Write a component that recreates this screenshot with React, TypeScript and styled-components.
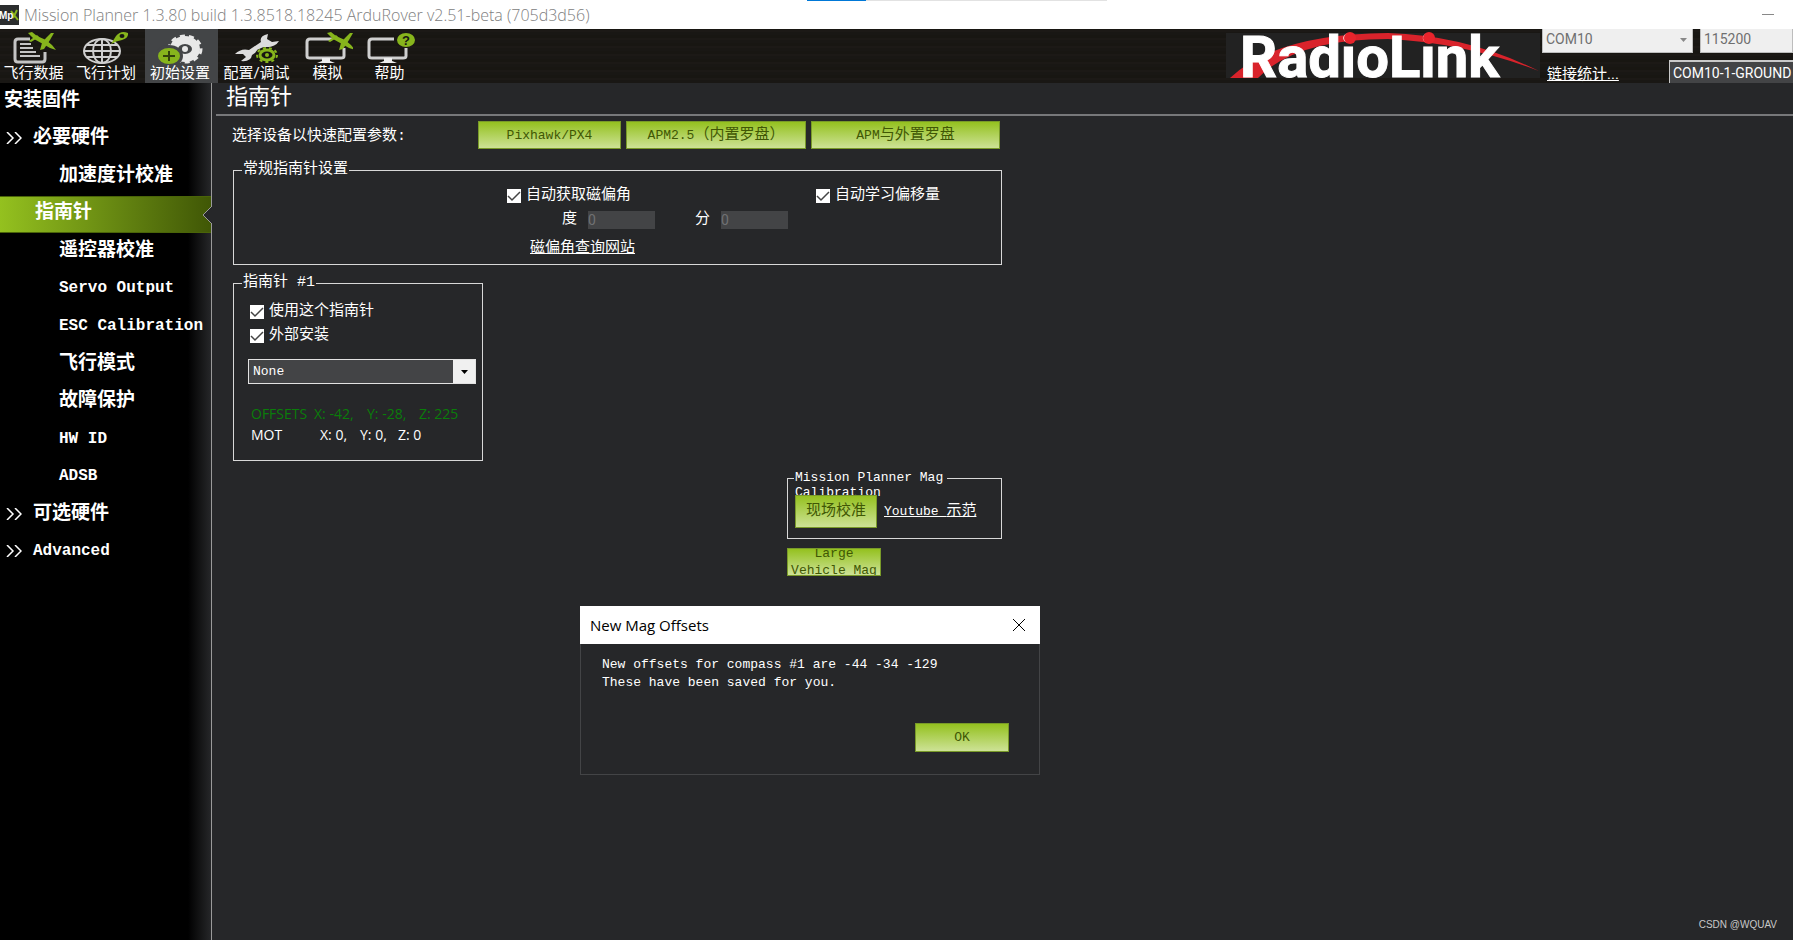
import React from "react";
import styled, { createGlobalStyle, css } from "styled-components";

const MONO = `"Liberation Mono", "Noto Sans CJK SC", monospace`;
const SANS = `Roboto, "Noto Sans CJK SC", sans-serif`;
const UI = `"Open Sans", "Noto Sans CJK SC", sans-serif`;

const GlobalStyle = createGlobalStyle`
  * { box-sizing: border-box; }
  body { margin: 0; background: #262729; color: #fff; font: 15px/20px ${MONO}; }
  button, input, select { font: inherit; margin: 0; padding: 0; border-radius: 0; }
  a { color: inherit; }
`;

const Window = styled.div`
  display: flex;
  flex-direction: column;
  min-height: 100vh;
  position: relative;
  overflow: hidden;
`;

const TitleBar = styled.header`
  display: flex;
  align-items: center;
  gap: 5px;
  height: 29px;
  background: #fff;
  color: #808080;
  font: 300 16px/28px ${UI};
`;
const AppTitle = styled.h1`
  flex: 1;
  margin: 0;
  font: inherit;
`;
const Minimize = styled.button`
  width: 50px;
  height: 26px;
  border: 0;
  background: none;
  svg { display: block; margin: 0 auto; }
`;
const TopStrip = styled.div`
  position: absolute;
  top: 0;
  left: 45%;
  display: flex;
  width: 300px;
  height: 1px;
  background: #e2e2e2;
`;
const TopStripActive = styled.div`
  width: 59px;
  background: #0078d7;
`;

const MenuBar = styled.nav`
  display: flex;
  height: 54px;
  background: repeating-linear-gradient(0deg, #191714 0 3px, #1c1916 3px 5px, #181612 5px 8px);
`;
const MenuButton = styled.button<{ $w: number; $active?: boolean }>`
  display: flex;
  flex-direction: column;
  align-items: center;
  flex: none;
  width: ${(p) => p.$w}px;
  padding-right: 3px;
  border: 0;
  background: ${(p) => (p.$active ? "#434547" : "none")};
  color: #fff;
  font: 15px/18px ${SANS};
  white-space: nowrap;
  svg { flex: none; display: block; margin-top: 1px; }
`;
const Spacer = styled.div`
  flex: 1;
`;
const Logo = styled.svg`
  flex: none;
  margin-right: 2px;
`;
const ConnectionPanel = styled.div`
  display: flex;
  flex-direction: column;
  flex: none;
  gap: 7px;
  width: 251px;
  font: 15px/20px ${SANS};
  overflow: hidden;
`;
const Row = styled.div`
  display: flex;
  justify-content: space-between;
`;
const LightSelectWrap = styled.div<{ $w: number }>`
  position: relative;
  flex: none;
  width: ${(p) => p.$w}px;
`;
const LightSelect = styled.select`
  appearance: none;
  display: block;
  width: 100%;
  height: 24px;
  padding: 0 3px 4px;
  border: solid #bdbdbd;
  border-width: 0 1px 1px;
  background: #efefef;
  color: #6f6f6f;
  font-size: 14px;
`;
const Arrow = styled.svg`
  position: absolute;
  right: 6px;
  top: 9px;
  pointer-events: none;
`;
const StatsLink = styled.a`
  padding: 4px 0 0 5px;
`;
const PortSelect = styled.select`
  appearance: none;
  width: 124px;
  height: 26px;
  padding: 0 0 2px 3px;
  border: solid #c9c9c9;
  border-width: 2px 0 0 1px;
  background: #434446;
  color: #fff;
  font-size: 14px;
`;

const Body = styled.div`
  display: flex;
  flex: 1;
`;
const Sidebar = styled.nav`
  flex: none;
  width: 212px;
  border-right: 1px solid #9a9a9a;
  background: linear-gradient(90deg, #000 188px, #262729 211px);
`;
const NavList = styled.div`
  display: grid;
  grid-auto-rows: 1fr;
  height: 488px;
`;
const NavItem = styled.a<{ $level: number; $active?: boolean }>`
  position: relative;
  display: flex;
  align-items: center;
  gap: 11px;
  padding: 0 0 2px ${(p) => [4, 6, 59, 35][p.$level]}px;
  color: #fff;
  font: bold 16px/32px ${MONO};
  text-decoration: none;
  white-space: nowrap;
  ${(p) =>
    p.$active &&
    css`
      border: solid #4a6408;
      border-width: 1px 0;
      background: linear-gradient(90deg, #94c11f, #405706);
    `}
`;
const NavText = styled.span<{ $cjk: boolean }>`
  font-size: ${(p) => (p.$cjk ? 19 : 16)}px;
`;
const Notch = styled.svg`
  position: absolute;
  right: -1px;
  top: 9px;
`;

const Main = styled.main`
  flex: 1;
  min-width: 0;
`;
const PageTitle = styled.h2`
  height: 33px;
  margin: 0 0 0 4px;
  padding-left: 10px;
  border-bottom: 2px solid #77787a;
  font: 22px/32px ${MONO};
`;
const Content = styled.div`
  width: 791px;
  padding: 5px 0 0 20px;
`;
const PresetRow = styled.div`
  display: flex;
  gap: 5px;
  height: 28px;
`;
const PresetLabel = styled.span`
  width: 241px;
  line-height: 32px;
`;
const GreenButton = styled.button<{ $w: number; $h: number }>`
  flex: none;
  width: ${(p) => p.$w}px;
  height: ${(p) => p.$h}px;
  border: 1px solid #799a29;
  background: linear-gradient(#94c11f, #cde296);
  color: #405704;
  font: 13px/17px ${MONO};
  overflow: hidden;
`;
const Cjk = styled.span`
  font-size: 15px;
`;
const Group = styled.fieldset<{ $w: number; $h: number; $top: number }>`
  width: ${(p) => p.$w}px;
  height: ${(p) => p.$h}px;
  min-width: 0;
  margin: ${(p) => p.$top}px 0 0 1px;
  padding: 0;
  border: 1px solid #d8d8d8;
`;
const Legend = styled.legend`
  height: 20px;
  margin-left: 8px;
  padding: 0 1px;
`;
const CheckLabel = styled.label`
  display: flex;
  align-items: center;
  gap: 5px;
  height: 24px;
`;
const CheckMark = styled.span`
  display: grid;
  width: 14px;
  height: 14px;
  background: #fff;
  input, svg { grid-area: 1 / 1; width: 14px; height: 14px; }
  input { appearance: none; }
  svg { pointer-events: none; visibility: hidden; }
  input:checked + svg { visibility: visible; }
`;
const DeclinationGrid = styled.div`
  display: grid;
  grid-template-columns: 309px 1fr;
  padding: 4px 0 0 273px;
`;
const FieldRow = styled.div`
  display: flex;
  gap: 40px;
  height: 24px;
  padding-left: 328px;
`;
const Field = styled.label`
  display: flex;
  align-items: center;
  gap: 11px;
`;
const NumberBox = styled.input`
  width: 67px;
  height: 18px;
  border: 0;
  background: #434446;
  color: #707173;
  font: 14px/18px ${SANS};
`;
const SiteLink = styled.a`
  display: block;
  width: max-content;
  margin: 7px 0 0 296px;
`;
const CompassBody = styled.div`
  padding: 7px 6px 0 14px;
`;
const CompassChecks = styled.div`
  padding-left: 2px;
`;
const Orientation = styled.div`
  position: relative;
  height: 25px;
  margin: 11px 0 19px;
  border: 1px solid #e2e2e2;
  background: #434446;
  select {
    appearance: none;
    display: block;
    width: 100%;
    height: 23px;
    padding-left: 4px;
    border: 0;
    background: none;
    color: #fff;
    font: 13px/20px ${MONO};
  }
`;
const DropArrow = styled.span`
  position: absolute;
  right: 0;
  top: 0;
  display: grid;
  place-items: center;
  width: 22px;
  height: 23px;
  background: #f0f0f0;
  pointer-events: none;
`;
const Readout = styled.div<{ $color: string; $cols: string }>`
  display: grid;
  grid-template-columns: ${(p) => p.$cols};
  padding-left: 3px;
  color: ${(p) => p.$color};
  font: 14px/21px ${UI};
  white-space: nowrap;
`;
const Calibration = styled.section`
  margin: 9px 0 0 554px;
`;
const MagLegend = styled.legend`
  width: 153px;
  height: 16px;
  margin-left: 6px;
  padding: 0 1px;
  font: 13px/15px ${MONO};
`;
const MagRow = styled.div`
  position: relative;
  display: flex;
  align-items: center;
  gap: 7px;
  padding: 9px 0 0 7px;
`;
const VideoLink = styled.a`
  font-size: 13px;
  white-space: nowrap;
`;
const VehicleButton = styled(GreenButton)`
  display: flex;
  align-items: center;
  justify-content: center;
  margin: 9px 0 0 1px;
`;

const Dialog = styled.section`
  position: absolute;
  left: 580px;
  top: 606px;
  width: 460px;
  height: 169px;
  border: 1px solid #434446;
  background: #262729;
`;
const DialogBar = styled.header`
  display: flex;
  justify-content: space-between;
  align-items: center;
  height: 38px;
  margin: -1px -1px 0;
  padding: 0 13px 0 10px;
  background: #fff;
  color: #000;
  h3 { margin: 0; font: 15px/18px ${UI}; }
  button { width: 16px; height: 16px; border: 0; background: none; }
  svg { display: block; }
`;
const DialogBody = styled.div`
  display: flex;
  flex-direction: column;
  padding: 12px 30px 0 21px;
  font: 13px/18px ${MONO};
  p { margin: 0 0 31px; }
  button { align-self: flex-end; }
`;
const Watermark = styled.footer`
  position: absolute;
  right: 16px;
  bottom: 7px;
  color: #c8c8c8;
  font: 10px/16px "Liberation Sans", sans-serif;
`;

const Plane = ({ x, y }: { x: number; y: number }) => (
  <g transform={`translate(${x} ${y})`} fill="#87b51c">
    <path d="M0 1L4 0 9 4 18 8 24 13 28 18 22 16 15 12 6 7z" />
    <path d="M23 1L26 1 22 8 16 17 12 18 14 11 18 6z" />
    <path d="M1 9L9 3 11 5 3 10z" />
  </g>
);
const Icon = ({ w, children }: { w: number; children: React.ReactNode }) => (
  <svg width={w} height="34" viewBox={`0 0 ${w} 34`} fill="none">{children}</svg>
);

const DataIcon = () => (
  <Icon w={44}>
    <path d="M18 9H6q-3 0-3 3v17q0 3 3 3h24q3 0 3-3V22" stroke="#c4c4c4" strokeWidth="3" />
    <path d="M8 14h11M8 18h13M8 22h16M8 26h20" stroke="#c4c4c4" strokeWidth="2" />
    <Plane x={16} y={2} />
  </Icon>
);
const GlobeIcon = () => (
  <Icon w={48}>
    <g stroke="#cfcfcf" strokeWidth="2">
      <ellipse cx="20" cy="21" rx="18" ry="12" />
      <ellipse cx="20" cy="21" rx="9" ry="12" />
      <path d="M20 9v24M2 21h36M5 15h30M5 27h30" />
    </g>
    <path d="M29 14L34 6Q39 0 46 3Q47 8 40 10Q34 11 29 14z" fill="#87b51c" />
    <ellipse cx="40" cy="6" rx="2.500" ry="2" fill="#171512" />
  </Icon>
);
const SetupIcon = () => (
  <Icon w={46}>
    <ellipse cx="28" cy="19" rx="11" ry="9" stroke="#e8e8e8" strokeWidth="8" />
    <ellipse cx="28" cy="19" rx="16" ry="13" stroke="#e8e8e8" strokeWidth="3" strokeDasharray="5 4" />
    <ellipse cx="12" cy="26" rx="14" ry="11" fill="#434547" />
    <circle cx="28" cy="19" r="3" fill="#e8e8e8" />
    <ellipse cx="12" cy="26" rx="11" ry="8" fill="#87b51c" />
    <path d="M12 21v10M6 26h12" stroke="#32420c" strokeWidth="2" />
  </Icon>
);
const WrenchIcon = () => (
  <Icon w={46}>
    <path d="M34 4Q25 6 27 12L15 20Q7 18 1 24L9 24 12 27 7 31Q17 32 18 25L30 17Q41 18 45 11L38 12 33 9z" fill="#dcdcdc" />
    <ellipse cx="33" cy="25" rx="12" ry="8" fill="#171512" />
    <ellipse cx="33" cy="25" rx="7" ry="5" stroke="#87b51c" strokeWidth="3" />
    <ellipse cx="33" cy="25" rx="10" ry="7" stroke="#87b51c" strokeWidth="2" strokeDasharray="3 3" />
    <circle cx="33" cy="25" r="2" fill="#87b51c" />
  </Icon>
);
const MonitorIcon = ({ children }: { children: React.ReactNode }) => (
  <Icon w={50}>
    <path d="M29 9H7q-3 0-3 3v14q0 2 3 2h31q3 0 3-2v-8" stroke="#cfcfcf" strokeWidth="3" />
    <path d="M19 28h8v3l5 2H14l5-2z" fill="#eee" />
    {children}
  </Icon>
);

const RadioLinkLogo = () => (
  <Logo width="314" height="54" viewBox="0 0 314 54" role="img" aria-label="RadioLink">
    <rect y="4" width="314" height="45" fill="#222" />
    <path d="M4 49Q50 5 162 4Q240 6 313 42Q240 14 162 10Q70 10 32 49z" fill="#d9232b" />
    <text x="14" y="48" fill="#fff" stroke="#fff" strokeWidth="1" fontFamily="Roboto, sans-serif" fontWeight="700" fontSize="58">
      RadioLink
    </text>
    <circle cx="124" cy="9" r="6" fill="#e8242c" />
    <circle cx="203" cy="9" r="6" fill="#e8242c" />
  </Logo>
);

const Check = ({ children }: { children: React.ReactNode }) => (
  <CheckLabel>
    <CheckMark>
      <input type="checkbox" defaultChecked />
      <svg viewBox="0 0 14 14">
        <path d="M1 7l4 4 8-8" fill="none" stroke="#444" strokeWidth="1.500" />
      </svg>
    </CheckMark>
    {children}
  </CheckLabel>
);

const NAV: { text: string; level: number; active?: boolean; cjk?: boolean }[] = [
  { text: "安装固件", level: 0, cjk: true },
  { text: "必要硬件", level: 1, cjk: true },
  { text: "加速度计校准", level: 2, cjk: true },
  { text: "指南针", level: 3, cjk: true, active: true },
  { text: "遥控器校准", level: 2, cjk: true },
  { text: "Servo Output", level: 2 },
  { text: "ESC Calibration", level: 2 },
  { text: "飞行模式", level: 2, cjk: true },
  { text: "故障保护", level: 2, cjk: true },
  { text: "HW ID", level: 2 },
  { text: "ADSB", level: 2 },
  { text: "可选硬件", level: 1, cjk: true },
  { text: "Advanced", level: 1 },
];

export default function App() {
  return (
    <Window>
      <GlobalStyle />
      <TitleBar>
        <svg width="19" height="20" viewBox="0 0 19 20">
          <rect width="19" height="20" fill="#2b2d2e" />
          <path d="M11 6l7 9M17 5l-4 8" stroke="#87b51c" strokeWidth="2" />
          <text x="-1" y="14" fill="#fff" fontFamily="Liberation Sans, sans-serif" fontWeight="700" fontSize="10">Mp</text>
        </svg>
        <AppTitle>Mission Planner 1.3.80 build 1.3.8518.18245 ArduRover v2.51-beta (705d3d56)</AppTitle>
        <Minimize aria-label="Minimize">
          <svg width="12" height="1"><rect width="12" height="1" fill="#888" /></svg>
        </Minimize>
      </TitleBar>
      <TopStrip><TopStripActive /></TopStrip>
      <MenuBar>
        <MenuButton $w={70}><DataIcon />飞行数据</MenuButton>
        <MenuButton $w={75}><GlobeIcon />飞行计划</MenuButton>
        <MenuButton $w={73} $active><SetupIcon />初始设置</MenuButton>
        <MenuButton $w={80}><WrenchIcon />配置/调试</MenuButton>
        <MenuButton $w={62}><MonitorIcon><Plane x={24} y={2} /></MonitorIcon>模拟</MenuButton>
        <MenuButton $w={62}>
          <MonitorIcon>
            <ellipse cx="41" cy="10" rx="9" ry="7" fill="#87b51c" />
            <text x="37" y="15" fill="#171512" fontFamily="Liberation Sans, sans-serif" fontWeight="700" fontSize="13">?</text>
          </MonitorIcon>
          帮助
        </MenuButton>
        <Spacer />
        <RadioLinkLogo />
        <ConnectionPanel>
          <Row>
            <LightSelectWrap $w={151}>
              <LightSelect aria-label="Port"><option>COM10</option></LightSelect>
              <Arrow width="7" height="4"><path d="M0 0h7L3.500 4z" fill="#888" /></Arrow>
            </LightSelectWrap>
            <LightSelectWrap $w={93}>
              <LightSelect aria-label="Baud rate"><option>115200</option></LightSelect>
            </LightSelectWrap>
          </Row>
          <Row>
            <StatsLink href="#stats">链接统计...</StatsLink>
            <PortSelect aria-label="Vehicle"><option>COM10-1-GROUND</option></PortSelect>
          </Row>
        </ConnectionPanel>
      </MenuBar>
      <Body>
        <Sidebar>
          <NavList>
            {NAV.map((n) => (
              <NavItem key={n.text} href="#" $level={n.level} $active={n.active}>
                {n.level === 1 && (
                  <svg width="16" height="12" viewBox="0 0 16 12" fill="none" stroke="#fff" strokeWidth="1.500">
                    <path d="M1 0l6 6-6 6M9 0l6 6-6 6" />
                  </svg>
                )}
                <NavText $cjk={!!n.cjk}>{n.text}</NavText>
                {n.active && (
                  <Notch width="10" height="18" viewBox="0 0 10 18">
                    <path d="M10 0L1 9l9 9" fill="#262729" stroke="#9a9a9a" />
                  </Notch>
                )}
              </NavItem>
            ))}
          </NavList>
        </Sidebar>
        <Main>
          <PageTitle>指南针</PageTitle>
          <Content>
            <PresetRow>
              <PresetLabel>选择设备以快速配置参数:</PresetLabel>
              <GreenButton $w={143} $h={28}>Pixhawk/PX4</GreenButton>
              <GreenButton $w={180} $h={28}>APM2.5<Cjk>（内置罗盘）</Cjk></GreenButton>
              <GreenButton $w={189} $h={28}>APM<Cjk>与外置罗盘</Cjk></GreenButton>
            </PresetRow>
            <Group $w={769} $h={105} $top={11}>
              <Legend>常规指南针设置</Legend>
              <DeclinationGrid>
                <Check>自动获取磁偏角</Check>
                <Check>自动学习偏移量</Check>
              </DeclinationGrid>
              <FieldRow>
                <Field>度<NumberBox defaultValue="0" disabled /></Field>
                <Field>分<NumberBox defaultValue="0" disabled /></Field>
              </FieldRow>
              <SiteLink href="#declination">磁偏角查询网站</SiteLink>
            </Group>
            <Group $w={250} $h={188} $top={8}>
              <Legend>指南针 #1</Legend>
              <CompassBody>
                <CompassChecks>
                  <Check>使用这个指南针</Check>
                  <Check>外部安装</Check>
                </CompassChecks>
                <Orientation>
                  <select aria-label="Orientation"><option>None</option></select>
                  <DropArrow>
                    <svg width="7" height="4"><path d="M0 0h7L3.500 4z" fill="#000" /></svg>
                  </DropArrow>
                </Orientation>
                <Readout $color="#0a7d0a" $cols="63px 53px 52px 1fr">
                  <span>OFFSETS</span><span>X: -42,</span><span>Y: -28,</span><span>Z: 225</span>
                </Readout>
                <Readout $color="#fff" $cols="69px 40px 38px 1fr">
                  <span>MOT</span><span>X: 0,</span><span>Y: 0,</span><span>Z: 0</span>
                </Readout>
              </CompassBody>
            </Group>
            <Calibration>
              <Group $w={215} $h={69} $top={0}>
                <MagLegend>Mission Planner Mag Calibration</MagLegend>
                <MagRow>
                  <GreenButton $w={82} $h={33}><Cjk>现场校准</Cjk></GreenButton>
                  <VideoLink href="#video">Youtube <Cjk>示范</Cjk></VideoLink>
                </MagRow>
              </Group>
              <VehicleButton $w={94} $h={28}>Large Vehicle Mag</VehicleButton>
            </Calibration>
          </Content>
        </Main>
      </Body>
      <Dialog role="dialog" aria-label="New Mag Offsets">
        <DialogBar>
          <h3>New Mag Offsets</h3>
          <button aria-label="Close">
            <svg width="16" height="16" viewBox="0 0 16 16" stroke="#000">
              <path d="M2 2l12 12M14 2L2 14" />
            </svg>
          </button>
        </DialogBar>
        <DialogBody>
          <p>New offsets for compass #1 are -44 -34 -129<br />These have been saved for you.</p>
          <GreenButton $w={94} $h={29}>OK</GreenButton>
        </DialogBody>
      </Dialog>
      <Watermark>CSDN @WQUAV</Watermark>
    </Window>
  );
}
